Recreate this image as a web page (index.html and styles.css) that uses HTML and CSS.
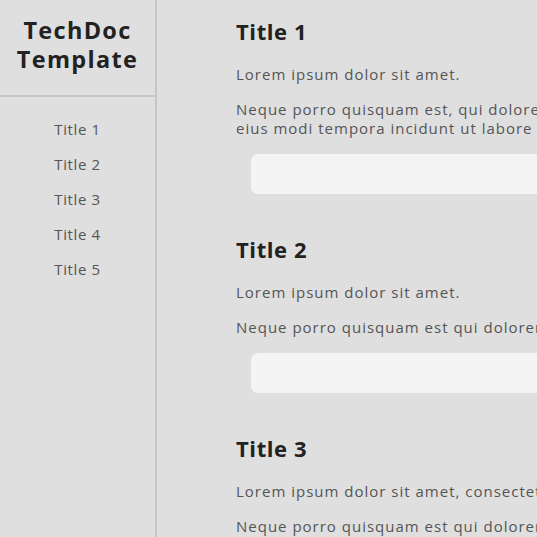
FILE: index.html
```html
<!DOCTYPE html>
<html lang="en">
<head>
<meta charset="utf-8">
<title>TechDoc Template</title>
<link rel="stylesheet" href="styles.css">
</head>
<body>
<div class="page">
  <nav class="sidebar">
    <header class="brand">TechDoc<br>Template</header>
    <ul class="nav">
      <li><a href="#t1">Title 1</a></li>
      <li><a href="#t2">Title 2</a></li>
      <li><a href="#t3">Title 3</a></li>
      <li><a href="#t4">Title 4</a></li>
      <li><a href="#t5">Title 5</a></li>
    </ul>
  </nav>
  <main class="main">
    <section class="section" id="t1">
      <h2 class="title">Title 1</h2>
      <p class="text">Lorem ipsum dolor sit amet.</p>
      <p class="text">Neque porro quisquam est, qui dolorem ipsum quia dolor sit amet, consectetur, adipisci velit, sed quia non numquam<br>eius modi tempora incidunt ut labore et dolore magnam aliquam quaerat voluptatem.</p>
      <div class="code"></div>
    </section>
    <section class="section" id="t2">
      <h2 class="title">Title 2</h2>
      <p class="text">Lorem ipsum dolor sit amet.</p>
      <p class="text">Neque porro quisquam est qui dolorem ipsum quia dolor sit amet.</p>
      <div class="code"></div>
    </section>
    <section class="section" id="t3">
      <h2 class="title">Title 3</h2>
      <p class="text">Lorem ipsum dolor sit amet, consectetur adipiscing elit.</p>
      <p class="text">Neque porro quisquam est qui dolorem ipsum quia dolor sit amet.</p>
      <div class="code"></div>
    </section>
  </main>
</div>
</body>
</html>
```

FILE: styles.css
```css
html, body {
  margin: 0;
  padding: 0;
  background: #dfdfdf;
  overflow: hidden;
  height: 100%;
}
body {
  font-family: "Open Sans", "DejaVu Sans", sans-serif;
}
.page {
  display: flex;
  min-height: 100vh;
}
.sidebar {
  flex: 0 0 155px;
  border-right: 2px solid #c6c6c6;
  min-height: 100vh;
}
.brand {
  font-weight: 700;
  font-size: 23.5px;
  line-height: 29px;
  letter-spacing: 1.3px;
  color: #222;
  text-align: center;
  padding: 16px 0 21px;
  border-bottom: 2px solid #c6c6c6;
}
.nav {
  list-style: none;
  margin: 0;
  padding: 22px 0 0;
  display: flex;
  flex-direction: column;
  gap: 15px;
  text-align: center;
}
.nav li {
  line-height: 20px;
}
.nav a {
  color: #555;
  text-decoration: none;
  font-size: 15px;
  line-height: 20px;
  letter-spacing: 0.6px;
}
.main {
  flex: 1;
  padding: 17px 0 0 79px;
  min-width: 0;
  display: flex;
  flex-direction: column;
  gap: 41px;
}
.section {
  display: flex;
  flex-direction: column;
}
.title {
  margin: 0 0 20px;
  font-size: 22px;
  line-height: 28px;
  font-weight: 700;
  letter-spacing: 0.6px;
  color: #222;
}
.text {
  margin: 0 0 16px;
  font-size: 15px;
  line-height: 19px;
  letter-spacing: 1px;
  color: #555;
  white-space: nowrap;
}
.code {
  margin: 0 0 0 15px;
  height: 40px;
  width: 600px;
  background: #f4f4f4;
  border-radius: 7px;
}
```
